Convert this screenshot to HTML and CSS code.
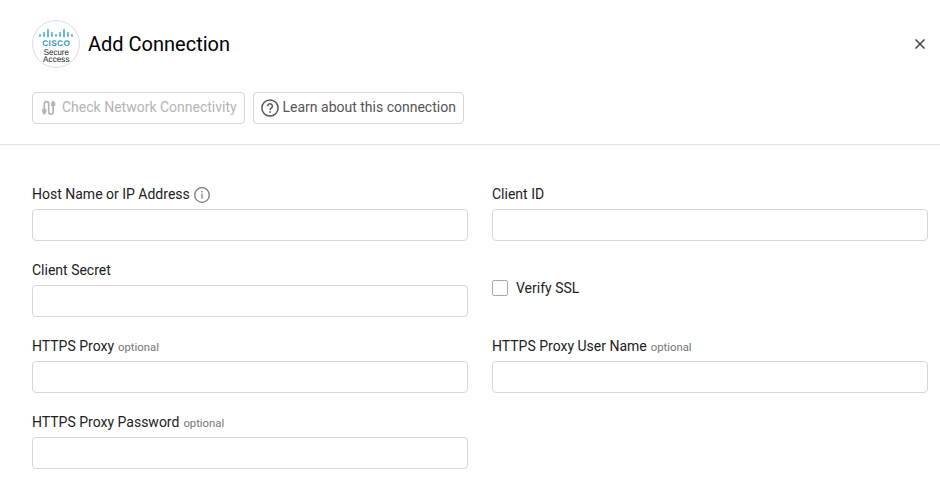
FILE: index.html
```html
<!DOCTYPE html>
<html lang="en">
<head>
<meta charset="utf-8">
<title>Add Connection</title>
<link rel="stylesheet" href="styles.css">
</head>
<body>
<header class="header">
  <div class="title-row">
    <svg class="logo" viewBox="0 0 48 48" role="img" aria-label="Cisco Secure Access">
      <circle cx="24" cy="24" r="23.5" fill="#fff" stroke="#dcdce8"/>
      <path d="M8 14.7v1.5M12 12.7v3.5M16 9.7v7.1M20 12.7v3.5M24 14.7v1.5M28 12.7v3.5M32 9.7v7.1M36 12.7v3.5M40 14.7v1.5" stroke="#49a5d6" stroke-width="1.6" stroke-linecap="round"/>
      <text class="logo-brand" x="24" y="26.4" textLength="27.5" lengthAdjust="spacing">CISCO</text>
      <text class="logo-product" x="24.3" y="34.6" textLength="25" lengthAdjust="spacingAndGlyphs">Secure</text>
      <text class="logo-product" x="24.3" y="42" textLength="26.4" lengthAdjust="spacingAndGlyphs">Access</text>
    </svg>
    <h1 class="title">Add Connection</h1>
    <button class="close" aria-label="Close">
      <svg width="10" height="10" viewBox="0 0 10 10"><path d="M.5.5l9 9M9.5.5l-9 9" stroke="#444" stroke-width="1.5"/></svg>
    </button>
  </div>
  <div class="actions">
    <button class="btn btn-check" disabled>
      <svg width="16" height="16" viewBox="0 0 16 16" fill="none" stroke="#b4b4b4" stroke-width="1.7">
        <path d="M3.3 10V3.9a2.2 2.2 0 0 1 4.4 0v8a2.2 2.2 0 0 0 4.4 0V5"/>
        <path d="M1.2 9h4.2v3.2l-1 1.1v1.2H2.2v-1.2l-1-1.1zM10.1 6V3l.9-1V.9h2.3V2l1 1v3z" fill="#b4b4b4" stroke="none"/>
      </svg>
      <span>Check Network Connectivity</span>
    </button>
    <button class="btn btn-learn">
      <svg width="18" height="18" viewBox="0 0 18 18" fill="none" stroke="#555" stroke-width="1.5">
        <circle cx="9" cy="9" r="8.1"/>
        <path d="M6.6 7.1a2.4 2.4 0 1 1 3.7 2.1C9.4 9.8 9 10.1 9 11"/>
        <path d="M9 12.2v1.5"/>
      </svg>
      <span>Learn about this connection</span>
    </button>
  </div>
</header>
<main class="form">
  <div class="field">
    <label class="label" for="host">Host Name or IP Address
      <svg class="info" width="16" height="16" viewBox="0 0 16 16" fill="none" stroke="#777"><circle cx="8" cy="8" r="7.3" stroke-width="1.3"/><path d="M8 6.8v5M8 4v1.5" stroke-width="1.2"/></svg>
    </label>
    <input class="input" id="host">
  </div>
  <div class="field">
    <label class="label" for="client">Client ID</label>
    <input class="input" id="client">
  </div>
  <div class="field">
    <label class="label" for="secret">Client Secret</label>
    <input class="input" id="secret" type="password">
  </div>
  <label class="check"><input class="checkbox" type="checkbox"><span>Verify SSL</span></label>
  <div class="field">
    <label class="label" for="proxy">HTTPS Proxy <span class="optional">optional</span></label>
    <input class="input" id="proxy">
  </div>
  <div class="field">
    <label class="label" for="user">HTTPS Proxy User Name <span class="optional">optional</span></label>
    <input class="input" id="user">
  </div>
  <div class="field">
    <label class="label" for="password">HTTPS Proxy Password <span class="optional">optional</span></label>
    <input class="input" id="password" type="password">
  </div>
</main>
</body>
</html>
```
FILE: styles.css
```css
* {
  box-sizing: border-box;
}

body {
  margin: 0;
  background: #fff;
  color: #212121;
  font: 14px/20px Roboto, "Liberation Sans", sans-serif;
}

.header {
  height: 145px;
  padding: 20px 12px 0 32px;
  border-bottom: 1px solid #e0e1ea;
}

.title-row {
  display: flex;
  align-items: center;
  gap: 8px;
}

.logo {
  width: 48px;
  height: 48px;
}

.logo text {
  text-anchor: middle;
  font-family: "Liberation Sans", sans-serif;
  text-rendering: geometricPrecision;
}

.logo-brand {
  fill: #2998cf;
  font-size: 8.2px;
  font-weight: 700;
}

.logo-product {
  fill: #222;
  font-size: 8.4px;
}

.title {
  margin: 0;
  color: #000;
  font-size: 20px;
  line-height: 28px;
  font-weight: 400;
}

.close {
  display: flex;
  align-items: center;
  justify-content: center;
  width: 16px;
  height: 16px;
  margin-left: auto;
  padding: 0;
  border: 0;
  background: none;
}

.actions {
  display: flex;
  gap: 8px;
  margin-top: 24px;
}

.btn {
  display: flex;
  align-items: center;
  height: 32px;
  padding: 0 7px 2px;
  border: 1px solid #d6d6d6;
  border-radius: 4px;
  background: #fff;
  color: #555;
  font: inherit;
}

.btn svg {
  flex: none;
  position: relative;
  top: 1px;
}

.btn-check {
  gap: 5px;
  width: 213px;
  padding-left: 8px;
  color: #b4b4b4;
}

.btn-learn {
  gap: 3.5px;
  width: 211px;
}

.btn span {
  white-space: nowrap;
}

.form {
  display: grid;
  grid-template-columns: 436px 436px;
  gap: 20px 24px;
  padding: 40px 12px 12px 32px;
}

.label {
  display: flex;
  align-items: center;
  gap: 4px;
  height: 18px;
  margin-bottom: 6px;
}

.info {
  position: relative;
  top: 1px;
}

.optional {
  color: #757575;
  font-size: 11.3px;
  position: relative;
  top: 2px;
}

.input {
  display: block;
  width: 100%;
  height: 32px;
  border: 1px solid #d6d6d6;
  border-radius: 4px;
  background: #fff;
}

.check {
  display: flex;
  align-items: center;
  gap: 8px;
  height: 16px;
  margin-top: 19px;
}

.checkbox {
  appearance: none;
  width: 16px;
  height: 16px;
  margin: 0;
  border: 1px solid #a8a8a8;
  border-radius: 2px;
  background: #fff;
}
```
